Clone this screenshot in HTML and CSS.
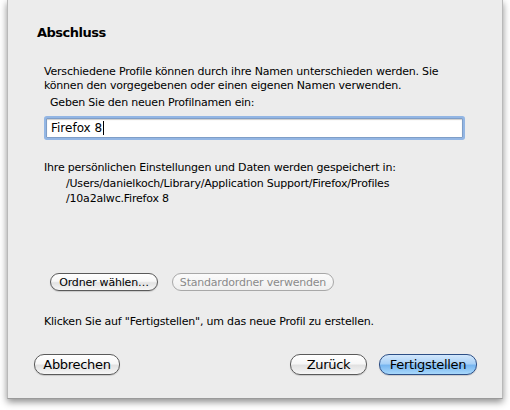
FILE: index.html
```html
<!DOCTYPE html>
<html lang="de">
<head>
<meta charset="utf-8">
<link rel="stylesheet" href="styles.css">
</head>
<body>
<div class="sheet">
  <h1 class="title">Abschluss</h1>
  <p class="intro">Verschiedene Profile können durch ihre Namen unterschieden werden. Sie können den vorgegebenen oder einen eigenen Namen verwenden.</p>
  <label class="label" for="name">Geben Sie den neuen Profilnamen ein:</label>
  <div class="field"><span class="value">Firefox 8</span><span class="caret"></span></div>
  <p class="info">Ihre persönlichen Einstellungen und Daten werden gespeichert in:</p>
  <div class="path">/Users/danielkoch/Library/Application Support/Firefox/Profiles<br>/10a2alwc.Firefox 8</div>
  <div class="folder-row">
    <span class="btn small choose">Ordner wählen…</span>
    <span class="btn small disabled">Standardordner verwenden</span>
  </div>
  <p class="hint">Klicken Sie auf "Fertigstellen", um das neue Profil zu erstellen.</p>
  <div class="actions">
    <span class="btn big cancel">Abbrechen</span>
    <span class="spacer"></span>
    <span class="btn big back">Zurück</span>
    <span class="btn big primary">Fertigstellen</span>
  </div>
</div>
</body>
</html>
```

FILE: styles.css
```css
html, body {
  margin: 0;
  padding: 0;
  background: #ffffff;
}
body {
  width: 510px;
  height: 410px;
  overflow: hidden;
  font-family: "DejaVu Sans", "Lucida Grande", sans-serif;
  font-size: 11px;
  letter-spacing: -0.2px;
  color: #000;
}
.sheet {
  box-sizing: border-box;
  margin-left: 7px;
  width: 496px;
  height: 399px;
  background: #ececec;
  border-left: 1px solid #b9b9b9;
  border-right: 1px solid #b9b9b9;
  border-bottom: 1px solid #9a9a9a;
  box-shadow: 0 3px 7px rgba(0,0,0,0.45);
  display: flex;
  flex-direction: column;
  padding: 0 0 0 36px;
}
.title {
  margin: 25px 0 0 -7px;
  font-size: 13px;
  font-weight: bold;
  line-height: 16px;
  letter-spacing: -0.5px;
}
.intro {
  margin: 24px 0 0 0;
  width: 410px;
  line-height: 14px;
}
.label {
  display: block;
  margin: 3px 0 0 6px;
  line-height: 14px;
}
.field {
  box-sizing: border-box;
  margin: 8px 0 0 2px;
  width: 417px;
  height: 20px;
  background: #fff;
  border: 1px solid #7f9ec7;
  box-shadow: 0 0 0 2px #93b6e4, inset 0 1px 1px rgba(0,0,0,0.2);
  border-radius: 1px;
  display: flex;
  align-items: center;
  padding-left: 4px;
  font-size: 12px;
  letter-spacing: 0;
}
.caret {
  display: inline-block;
  width: 1px;
  height: 14px;
  background: #000;
  margin-left: 1px;
}
.info {
  margin: 23px 0 0 0;
  line-height: 14px;
}
.path {
  margin: 1px 0 0 22px;
  line-height: 15px;
}
.folder-row {
  margin: 67px 0 0 6px;
  display: flex;
  gap: 14px;
}
.hint {
  margin: 24px 0 0 0;
  line-height: 14px;
}
.actions {
  margin: 25px 0 0 -10px;
  display: flex;
  align-items: center;
  width: 443px;
  gap: 12px;
}
.spacer { flex: 1; }
.btn {
  box-sizing: border-box;
  display: inline-flex;
  align-items: center;
  justify-content: center;
  border: 1px solid #5a5a5a;
  border-radius: 10px;
  background: linear-gradient(#ffffff 0%, #f7f7f7 45%, #e2e2e2 55%, #f6f6f6 100%);
  box-shadow: 0 1px 1px rgba(0,0,0,0.15);
  color: #000;
  white-space: nowrap;
}
.btn.small {
  height: 18px;
  font-size: 11px;
  padding: 0 8px;
}
.choose { width: 108px; }
.btn.disabled {
  width: 162px;
  color: #8a8a8a;
  border-color: #a8a8a8;
  background: linear-gradient(#fbfbfb, #efefef);
  box-shadow: none;
}
.btn.big {
  height: 21px;
  font-size: 13px;
  letter-spacing: -0.3px;
}
.cancel { width: 86px; }
.back { width: 77px; }
.primary {
  width: 98px;
  border-color: #2d4f86;
  background: linear-gradient(#d3e7fb 0%, #a9d1f7 45%, #78b6f0 55%, #a8d8fb 100%);
}
```
